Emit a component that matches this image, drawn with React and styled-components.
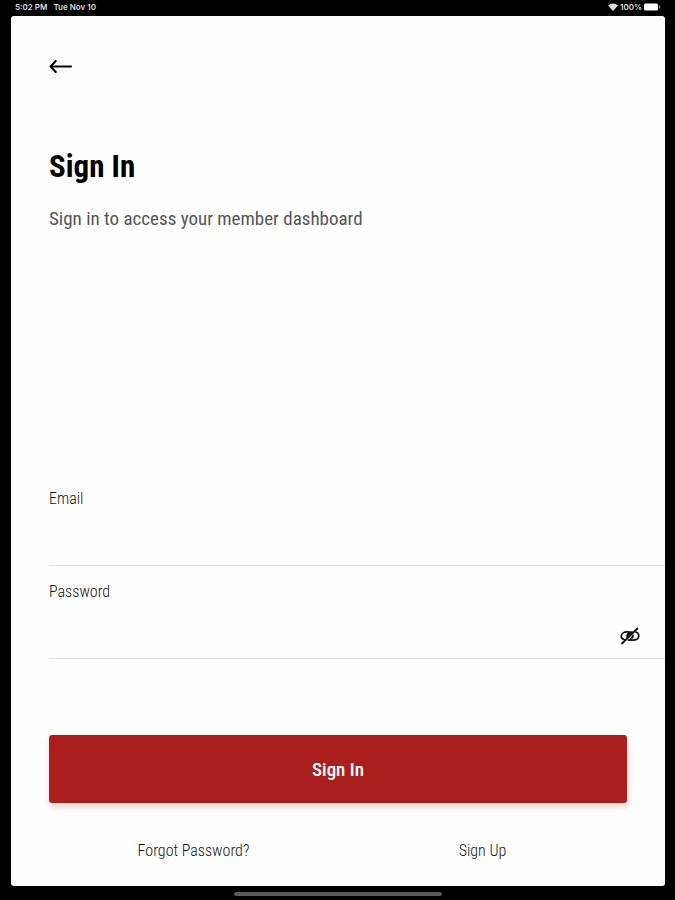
import { useState } from 'react';
import styled, { createGlobalStyle } from 'styled-components';

function StatusBar() {
  return (
    <Status>
      <StatusGroup>
        <span>5:02 PM</span>
        <span>Tue Nov 10</span>
      </StatusGroup>
      <StatusGroup $tight>
        <svg width="10" height="8" viewBox="0 0 10 8" fill="#ddd">
          <path d="M0 2.6C2.8-.3 7.2-.3 10 2.6L5 8z" />
        </svg>
        <span>100%</span>
        <svg width="17" height="8" viewBox="0 0 17 8" fill="#fff">
          <rect x="0" y="0.5" width="14" height="7" rx="1.5" />
          <rect x="15" y="2.5" width="1.2" height="3" rx="0.6" fill="#999" />
        </svg>
      </StatusGroup>
    </Status>
  );
}

function App() {
  const [email, setEmail] = useState('');
  const [password, setPassword] = useState('');
  const [visible, setVisible] = useState(false);

  return (
    <Device>
      <GlobalStyle />
      <StatusBar />

      <Screen>
        <BackButton type="button" aria-label="Back">
          <svg width="24" height="16" viewBox="0 0 24 16" fill="none">
            <path
              d="M6.8 3 1.5 8.5l5.3 5.5M1.8 8.5H22"
              stroke="#000"
              strokeWidth="2"
              strokeLinecap="round"
              strokeLinejoin="round"
            />
          </svg>
        </BackButton>

        <Title>Sign In</Title>
        <Subtitle>Sign in to access your member dashboard</Subtitle>

        <Form onSubmit={(e) => e.preventDefault()}>
          <Field>
            <Label htmlFor="email">Email</Label>
            <InputRow>
              <Input
                id="email"
                type="email"
                value={email}
                onChange={(e) => setEmail(e.target.value)}
              />
            </InputRow>
          </Field>

          <Field>
            <Label htmlFor="password">Password</Label>
            <InputRow>
              <Input
                id="password"
                type={visible ? 'text' : 'password'}
                value={password}
                onChange={(e) => setPassword(e.target.value)}
              />
              <EyeButton
                type="button"
                aria-label="Toggle password visibility"
                onClick={() => setVisible(!visible)}
              >
                <svg width="20" height="18" viewBox="0 0 20 18" fill="none">
                  <path
                    d="M4.5 12.7C2.2 12 1.2 10.8 1.2 9.2c0-2.6 2.6-4.3 6-4.3 2 0 3.8.2 5.4.4M15.8 5c2 .6 3 2 3 3.8 0 2.7-2.6 4.4-6.6 4.4H8.5"
                    stroke="#111"
                    strokeWidth="1.7"
                    strokeLinecap="round"
                  />
                  <path
                    d="M13 5C9.5 4 6.3 6 6.3 9c0 1.2.3 2 .8 2.7z"
                    fill="#111"
                  />
                  <path
                    d="M13.3 7.8c.5 2.4-.8 4.400-3.600 5z"
                    fill="#333"
                    stroke="#111"
                    strokeWidth="1"
                  />
                  <path
                    d="M2 16.5 17.4 1.5"
                    stroke="#111"
                    strokeWidth="1.8"
                    strokeLinecap="round"
                  />
                </svg>
              </EyeButton>
            </InputRow>
          </Field>

          <SubmitButton type="submit">Sign In</SubmitButton>
        </Form>

        <Links>
          <Link href="#forgot">Forgot Password?</Link>
          <Link href="#signup">Sign Up</Link>
        </Links>
      </Screen>

      <HomeArea>
        <HomeBar />
      </HomeArea>
    </Device>
  );
}

export default App;

const GlobalStyle = createGlobalStyle`
  * {
    box-sizing: border-box;
  }

  body {
    margin: 0;
    background: #000;
    font-family: 'Roboto Condensed', Roboto, 'Liberation Sans', sans-serif;
  }

  button,
  input {
    font-family: inherit;
  }
`;

const Device = styled.div`
  display: flex;
  flex-direction: column;
  min-height: 100vh;
  padding: 0 10px 0 11px;
  background: #000;
`;

const Status = styled.header`
  display: flex;
  justify-content: space-between;
  height: 16px;
  padding: 0 4px;
  color: #ddd;
  font-family: Inter, 'Liberation Sans', sans-serif;
  font-size: 8px;
  font-weight: 600;
  line-height: 14px;
`;

const StatusGroup = styled.div`
  display: flex;
  align-items: center;
  gap: ${({ $tight }) => ($tight ? '2px' : '6px')};
  height: 14px;
`;

const Screen = styled.main`
  display: flex;
  flex: 1;
  flex-direction: column;
  padding: 38px 0 24px 38px;
  border-radius: 3px;
  background: #fefefe;
`;

const BackButton = styled.button`
  display: flex;
  align-self: flex-start;
  padding: 4px 0;
  border: 0;
  background: none;
  cursor: pointer;
`;

const Title = styled.h1`
  margin: 69px 0 0;
  color: #000;
  font-size: 31px;
  font-weight: 700;
  line-height: 40px;
`;

const Subtitle = styled.p`
  margin: 20px 0 0;
  color: #555;
  font-size: 19px;
  line-height: 24px;
`;

const Form = styled.form`
  display: flex;
  flex-direction: column;
  margin-top: auto;
`;

const Field = styled.div`
  display: flex;
  flex-direction: column;
  height: 93px;
  padding-top: 16px;
  border-bottom: 1px solid #e2e2e2;
`;

const Label = styled.label`
  color: #111;
  font-size: 16px;
  font-weight: 300;
  line-height: 20px;
`;

const InputRow = styled.div`
  display: flex;
  flex: 1;
  align-items: center;
  padding: 12px 25px 0 0;
`;

const Input = styled.input`
  flex: 1;
  min-width: 0;
  height: 32px;
  padding: 0;
  border: 0;
  outline: none;
  background: transparent;
  color: #222;
  font-size: 16px;
`;

const EyeButton = styled.button`
  display: flex;
  padding: 0;
  border: 0;
  background: none;
  cursor: pointer;
`;

const SubmitButton = styled.button`
  height: 68px;
  margin: 76px 38px 0 0;
  border: 0;
  border-radius: 3px;
  background: #aa1f1e;
  box-shadow: 1px 4px 6px rgba(170, 31, 30, 0.2);
  color: #fff;
  font-size: 19px;
  font-weight: 500;
  cursor: pointer;
`;

const Links = styled.nav`
  display: grid;
  grid-template-columns: repeat(2, 1fr);
  margin: 37px 38px 0 0;
  text-align: center;
`;

const Link = styled.a`
  color: #111;
  font-size: 16px;
  font-weight: 300;
  line-height: 22px;
  text-decoration: none;
`;

const HomeArea = styled.footer`
  display: flex;
  justify-content: center;
  padding: 6px 0 4px;
`;

const HomeBar = styled.div`
  width: 208px;
  height: 4px;
  border-radius: 2px;
  background: #5a5a5a;
`;
